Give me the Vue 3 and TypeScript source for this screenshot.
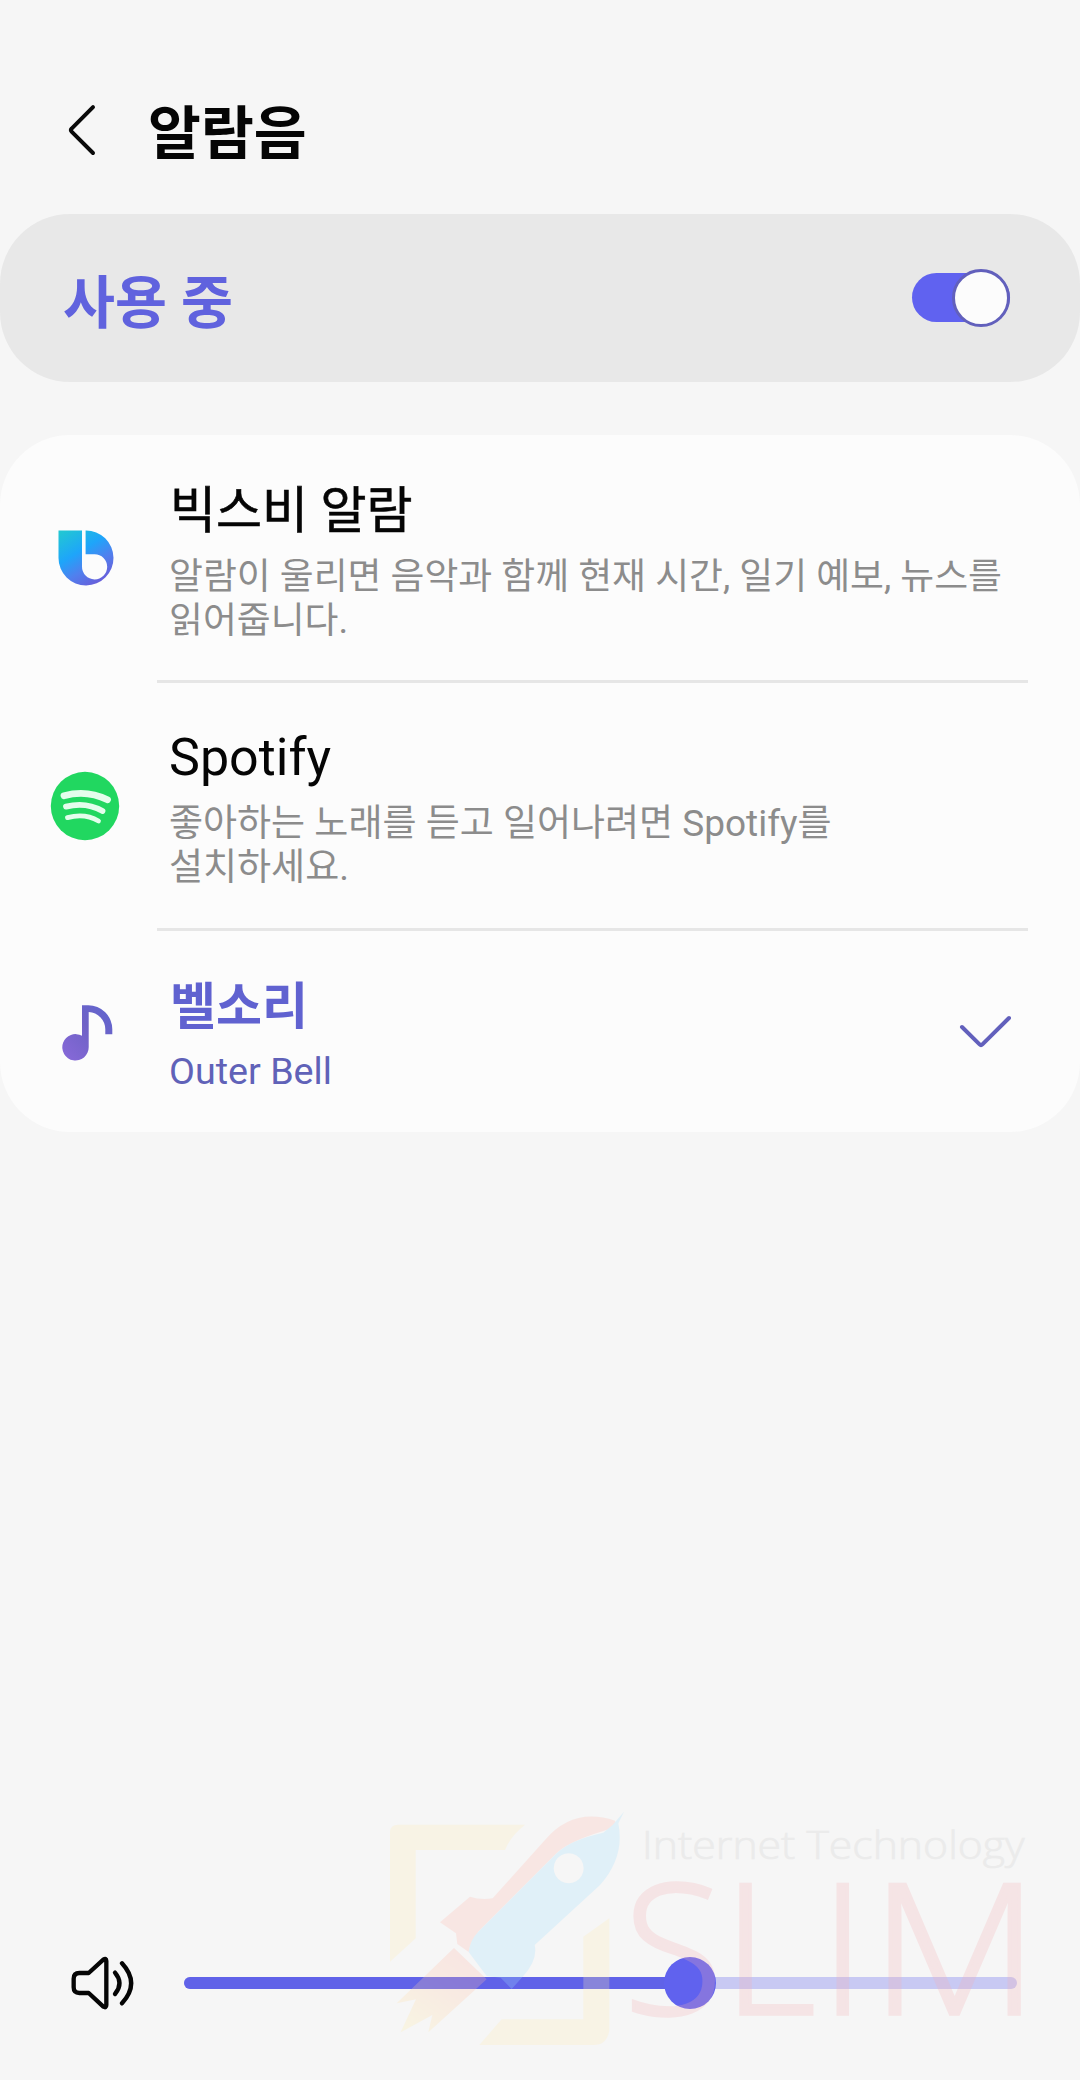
<script setup lang="ts">
import { ref } from 'vue'

interface SoundOption {
  id: string
  title: string
  lines: string[]
  selected: boolean
}

const enabled = ref(true)
const volume = ref(60.8)

const options: SoundOption[] = [
  {
    id: 'bixby',
    title: '빅스비 알람',
    lines: ['알람이 울리면 음악과 함께 현재 시간, 일기 예보, 뉴스를', '읽어줍니다.'],
    selected: false,
  },
  {
    id: 'spotify',
    title: 'Spotify',
    lines: ['좋아하는 노래를 듣고 일어나려면 Spotify를', '설치하세요.'],
    selected: false,
  },
  { id: 'ringtone', title: '벨소리', lines: ['Outer Bell'], selected: true },
]
</script>

<template>
  <main class="screen">
    <header class="header">
      <svg class="back" viewBox="0 0 30 54" fill="none" stroke="#0a0a0a" stroke-width="4" stroke-linecap="round" stroke-linejoin="round">
        <path d="M26 4.2 L4.6 25.6 Q3 27 4.6 28.6 L26 50" />
      </svg>
      <h1 class="heading">알람음</h1>
    </header>

    <section class="banner">
      <span class="banner-text">사용 중</span>
      <button class="toggle" :class="{ on: enabled }" @click="enabled = !enabled">
        <span class="knob"></span>
      </button>
    </section>

    <section class="card">
      <div v-for="o in options" :key="o.id" class="row" :class="[o.id, { selected: o.selected }]">
        <div class="icon">
          <svg v-if="o.id === 'bixby'" width="56" height="56" viewBox="0 0 56 56">
            <defs>
              <linearGradient id="bx" x1="0.1" y1="0" x2="0.72" y2="1">
                <stop offset="0" stop-color="#22c6d4" />
                <stop offset="0.4" stop-color="#1ea5fa" />
                <stop offset="0.68" stop-color="#5080ee" />
                <stop offset="1" stop-color="#6a5bd8" />
              </linearGradient>
            </defs>
            <path
              fill="url(#bx)"
              fill-rule="evenodd"
              d="M0.5 0.5 H24 V36.6 A12.6 12.6 0 1 0 36.6 24.2 H27.6 V0.5 A27.5 27.5 0 1 1 0.5 28 Z"
            />
          </svg>
          <svg v-else-if="o.id === 'spotify'" width="70" height="70" viewBox="0 0 70 70">
            <circle cx="35" cy="35" r="34.2" fill="#21d760" />
            <g fill="none" stroke="#e4fdec" stroke-linecap="round">
              <path stroke-width="6.8" d="M14 24.7 Q37 18.5 57.5 28.8" />
              <path stroke-width="5.8" d="M16 35.6 Q36 30.5 52.5 40" />
              <path stroke-width="4.8" d="M17.5 46.6 Q35 42 48.5 50" />
            </g>
          </svg>
          <svg v-else width="52" height="58" viewBox="0 0 52 58">
            <defs>
              <linearGradient id="nt" x1="0" y1="1" x2="1" y2="0">
                <stop offset="0.1" stop-color="#8468d6" />
                <stop offset="0.55" stop-color="#6f62c6" />
                <stop offset="1" stop-color="#5f66d0" />
              </linearGradient>
            </defs>
            <path
              fill="url(#nt)"
              d="M21 1.3 H27 A24 24 0 0 1 51.3 25.5 V30.3 H44.3 V25.5 A17.3 17.3 0 0 0 27.7 8 V43.3 A13.2 13.2 0 1 1 21 31.8 Z"
            />
          </svg>
        </div>
        <div class="body">
          <div class="title">{{ o.title }}</div>
          <div class="desc">
            <div v-for="l in o.lines" :key="l" class="line">{{ l }}</div>
          </div>
        </div>
        <svg v-if="o.selected" class="check" width="54" height="36" viewBox="0 0 54 36" fill="none" stroke="#6260bc" stroke-width="4" stroke-linecap="round" stroke-linejoin="round">
          <path d="M4 13 L21.6 30.4 Q23 31.8 24.4 30.4 L51 4" />
        </svg>
      </div>
    </section>

    <footer class="volume">
      <svg class="speaker" width="66" height="56" viewBox="90 102 198 168" fill="none" stroke="#050505" stroke-width="13" stroke-linecap="round" stroke-linejoin="round">
        <path d="M146 156 L190 116 Q199 110 199 120 V252 Q199 262 190 257 L146 216 H118 Q101 216 101 199 V173 Q101 156 118 156 Z" />
        <path d="M225 155 Q252 187 225 219" />
        <path d="M246 127 Q301 187 246 247" />
      </svg>
      <div class="track">
        <div class="fill" :style="{ width: volume + '%' }"></div>
        <div class="thumb" :style="{ left: volume + '%' }"></div>
      </div>
    </footer>

    <svg class="brand" viewBox="0 0 2130 870">
      <defs>
        <linearGradient id="flame" x1="0.85" y1="0.1" x2="0.2" y2="1">
          <stop offset="0" stop-color="#ffb5a8" />
          <stop offset="0.45" stop-color="#ffc9a8" />
          <stop offset="1" stop-color="#ffefa8" />
        </linearGradient>
      </defs>
      <g opacity="0.25">
        <path fill="#ffedb4" d="M60 125 Q62 104 84 104 H465 Q420 140 405 180 H137 V445 L60 515 Z" />
        <path fill="#ffedb4" d="M718 385 V720 Q712 765 670 765 H328 L395 688 H640 V440 Z" />
        <path fill="#ffb9ae" d="M735 92 Q610 50 525 150 L368 325 Q330 330 300 320 L210 397 L258 430 L262 462 L296 486 Q300 460 325 425 L560 190 Q600 150 738 112 Z" />
        <path
          fill="#a0e0ff"
          fill-rule="evenodd"
          d="M762 65 L745 100 Q765 200 690 285 L494 465 Q504 510 458 560 L425 597 L392 563 L350 558 L296 486 Q300 450 325 425 L560 190 Q600 150 700 128 L728 105 Z M596 190 a45 45 0 1 0 0.1 0 Z"
        />
        <path fill="url(#flame)" d="M252 474 L350 568 L175 727 L187 675 L92 727 L138 628 L80 640 Z" />
      </g>
      <g class="slim">
        <text x="761" y="673">S</text>
        <text x="1058" y="673">L</text>
        <text x="1350" y="673">I</text>
        <text x="1502" y="673" textLength="504" lengthAdjust="spacingAndGlyphs">M</text>
      </g>
      <text class="tagline" x="816" y="207" textLength="1148" lengthAdjust="spacingAndGlyphs">Internet Technology</text>
    </svg>
  </main>
</template>

<style>
body {
  margin: 0;
  background: #f6f6f6;
}
</style>

<style scoped>
.screen {
  position: relative;
  display: flex;
  flex-direction: column;
  width: 1080px;
  height: 2080px;
  overflow: hidden;
  background: #f6f6f6;
  color: #050505;
  font-family: Roboto, 'Noto Sans CJK KR', sans-serif;
}
.header {
  display: flex;
  align-items: center;
  box-sizing: border-box;
  height: 214px;
  padding: 46px 0 0 67px;
}
.back {
  width: 30px;
  height: 54px;
}
.heading {
  margin: 0 0 0 51px;
  padding-top: 10px;
  font-size: 57.5px;
  font-weight: 700;
  line-height: 80px;
}
.banner {
  display: flex;
  align-items: center;
  justify-content: space-between;
  box-sizing: border-box;
  height: 168px;
  padding: 0 70px 2px 63px;
  border-radius: 70px;
  background: #e8e8e8;
}
.banner-text {
  padding-top: 13px;
  color: #6062de;
  font-size: 56.5px;
  font-weight: 700;
  line-height: 80px;
}
.toggle {
  position: relative;
  width: 98px;
  height: 49px;
  padding: 0;
  border: 0;
  border-radius: 25px;
  background: #b9b9b9;
}
.toggle.on {
  background: #6062f0;
}
.knob {
  position: absolute;
  top: -4px;
  right: 0;
  box-sizing: border-box;
  width: 58px;
  height: 58px;
  border: 3px solid #6260bc;
  border-radius: 50%;
  background: #fcfcfc;
}
.card {
  height: 697px;
  margin-top: 53px;
  border-radius: 70px;
  background: #fcfcfc;
}
.row {
  position: relative;
  display: flex;
  box-sizing: border-box;
  height: 248px;
  padding-right: 68px;
}
.row:not(:last-child)::after {
  content: '';
  position: absolute;
  left: 157px;
  right: 52px;
  bottom: 0;
  height: 3px;
  background: #e6e6e6;
}
.ringtone {
  height: 201px;
}
.icon {
  display: flex;
  align-items: center;
  justify-content: center;
  box-sizing: border-box;
  width: 169px;
  height: 246px;
}
.bixby .icon {
  padding-left: 3px;
}
.icon svg {
  display: block;
}
.spotify .icon {
  height: 245px;
}
.ringtone .icon {
  height: 204px;
  padding-left: 5px;
}
.body {
  flex: 1;
  padding-top: 40px;
}
.title {
  padding-left: 1px;
  font-size: 50px;
  line-height: 72px;
  -webkit-text-stroke: 0.6px currentColor;
}
.spotify .title {
  padding: 0 0 2px;
  font-size: 52px;
  line-height: 70px;
  -webkit-text-stroke: 0;
}
.desc {
  margin-top: 8px;
  color: #8c8c8c;
  font-size: 36.85px;
}
.spotify .desc {
  margin-top: 7px;
  font-size: 37px;
}
.line {
  line-height: 44px;
  white-space: nowrap;
}
.selected .title {
  color: #6062d0;
  font-weight: 700;
  -webkit-text-stroke: 0;
}
.selected .desc {
  margin-top: 6px;
  color: #6062b8;
  font-size: 37.7px;
}
.check {
  align-self: center;
}
.volume {
  display: flex;
  align-items: center;
  height: 60px;
  margin-top: 821px;
  padding-left: 70px;
}
.speaker {
  margin-bottom: 1px;
}
.track {
  position: relative;
  width: 833px;
  height: 12px;
  margin-left: 48px;
  border-radius: 6px;
  background: #c8c9f3;
}
.fill {
  height: 12px;
  border-radius: 6px;
  background: #6062e8;
}
.thumb {
  position: absolute;
  top: -20px;
  width: 52px;
  height: 52px;
  margin-left: -26px;
  border-radius: 50%;
  background: #6062ee;
}
.brand {
  position: absolute;
  left: 370px;
  top: 1790px;
  width: 710px;
  height: 290px;
  pointer-events: none;
}
.slim {
  fill: #f5b0b4;
  stroke: #f5b0b4;
  stroke-width: 10px;
  opacity: 0.25;
  font-family: 'Open Sans', sans-serif;
  font-size: 544px;
  font-weight: 300;
}
.tagline {
  fill: #ebebeb;
  stroke: #ebebeb;
  stroke-width: 2px;
  font-family: 'Open Sans', sans-serif;
  font-size: 118px;
  font-weight: 300;
}
</style>
